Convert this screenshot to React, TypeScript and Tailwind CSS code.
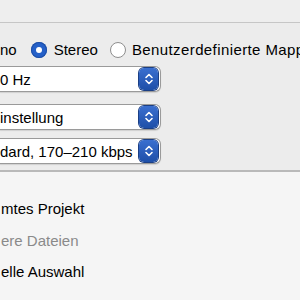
import React from "react";

function Stepper() {
  return (
    <div className="flex h-[22px] w-[19px] shrink-0 items-center justify-center rounded-[5px] bg-gradient-to-b from-[#3a6fd0] to-[#1e4fa8] shadow-[0_0_0_1px_#1b3f85]">
      <svg width="10" height="14" viewBox="0 0 10 14" fill="none">
        <path d="M2 5.5 L5 2.5 L8 5.5" stroke="white" strokeWidth="1.6" strokeLinecap="round" strokeLinejoin="round" />
        <path d="M2 8.5 L5 11.5 L8 8.5" stroke="white" strokeWidth="1.6" strokeLinecap="round" strokeLinejoin="round" />
      </svg>
    </div>
  );
}

function Popup({ text, className }: { text: string; className?: string }) {
  return (
    <div
      className={
        "flex h-[26px] w-[161px] items-center justify-between rounded-r-[6px] border-y border-r border-[#9a9a9a] bg-white pr-[2px] shadow-[0_1px_1px_rgba(0,0,0,0.12)] " +
        (className ?? "")
      }
    >
      <span className="pl-[0px] text-[15px] leading-none text-black">{text}</span>
      <Stepper />
    </div>
  );
}

export default function App() {
  return (
    <div
      className="flex h-[300px] w-[300px] flex-col overflow-hidden bg-[#ececec]"
      style={{ fontFamily: '"Liberation Sans", Arial, sans-serif' }}
    >
      <div className="h-[23px] shrink-0 border-b border-[#c6c6c6] bg-[#eeeeee]" />
      <div className="flex shrink-0 flex-col">
        <div className="mt-[19px] flex h-[16px] items-center whitespace-nowrap text-[15px] text-black">
          <span className="shrink-0">no</span>
          <span className="ml-[14px] flex h-[16px] w-[16px] shrink-0 items-center justify-center rounded-full bg-[#2560c8] shadow-[inset_0_0_0_1px_#1d4ea6]">
            <span className="h-[6px] w-[6px] rounded-full bg-white" />
          </span>
          <span className="ml-[7px] shrink-0">Stereo</span>
          <span className="ml-[12px] h-[16px] w-[16px] shrink-0 rounded-full border border-[#8e8e8e] bg-white" />
          <span className="ml-[6px] shrink-0 tracking-[0.4px]">Benutzerdefinierte Mappe</span>
        </div>
        <Popup text="0 Hz" className="mt-[8px]" />
        <Popup text="instellung" className="mt-[12px]" />
        <Popup text="dard, 170–210 kbps" className="mt-[8px]" />
      </div>
      <div className="mt-[6px] h-[2px] shrink-0 bg-[#b9b9b9]" />
      <div className="flex flex-1 flex-col bg-[#f5f5f5] text-[15px]">
        <div className="mt-[29px] pl-[1px] leading-none text-black">mtes Projekt</div>
        <div className="mt-[17px] pl-[1px] leading-none text-[#8a8a8a]">ere Dateien</div>
        <div className="mt-[16px] pl-[1px] leading-none text-black">elle Auswahl</div>
      </div>
    </div>
  );
}
